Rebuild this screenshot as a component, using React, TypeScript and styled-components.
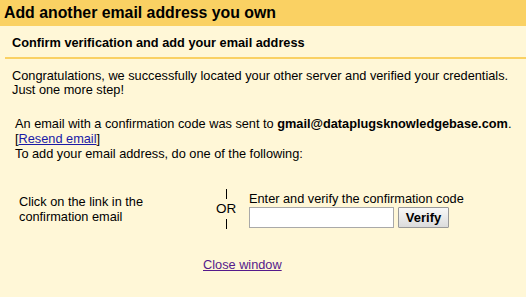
import React from "react";
import styled, { createGlobalStyle } from "styled-components";

const Global = createGlobalStyle`
  html, body { margin: 0; padding: 0; background: #fff7d7; }
  body { font-family: "Liberation Sans", Arial, sans-serif; font-size: 12.75px; color: #000; }
`;

const Page = styled.div`
  width: 526px;
  height: 297px;
  background: #fff7d7;
  overflow: hidden;
`;

const TitleBar = styled.div`
  height: 26px;
  background: #fad163;
  padding-left: 4px;
  font-size: 15.85px;
  font-weight: bold;
  line-height: 26px;
`;

const Panel = styled.div`
  margin-left: 5px;
`;

const SubHeader = styled.div`
  height: 31px;
  padding-left: 7px;
  border-bottom: 2px solid #fad163;
  font-weight: bold;
  line-height: 33px;
`;

const Body = styled.div`
  padding: 10px 0 0 7px;
`;

const Para = styled.div<{ $indent?: number; $gap?: number }>`
  padding-left: ${(p) => p.$indent ?? 0}px;
  margin-top: ${(p) => p.$gap ?? 0}px;
`;

const Line = styled.div<{ $h?: number }>`
  line-height: ${(p) => p.$h ?? 15}px;
`;

const Link = styled.a<{ $visited?: boolean }>`
  color: ${(p) => (p.$visited ? "#551a8b" : "#1a1aa6")};
  text-decoration: underline;
  cursor: pointer;
`;

const Choices = styled.div`
  display: grid;
  grid-template-columns: 199px 30px auto;
  align-items: center;
  margin-top: 25px;
`;

const LeftCell = styled.div`
  padding-left: 7px;
  line-height: 15px;
`;

const OrCell = styled.div`
  display: flex;
  flex-direction: column;
  align-items: center;
  line-height: 14px;
  font-size: 13.5px;
`;

const Bar = styled.span`
  width: 1px;
  height: 10px;
  background: #000;
  margin: 3px 0;
`;

const OrText = styled.span``;

const RightCell = styled.div`
  padding-left: 8px;
`;

const Label = styled.div`
  line-height: 15px;
  margin-bottom: 1px;
`;

const InputRow = styled.div`
  display: flex;
  align-items: center;
  gap: 4px;
`;

const CodeInput = styled.input`
  box-sizing: border-box;
  width: 145px;
  height: 21px;
  border: 1px solid #a9a9a9;
  background: #fff;
  padding: 0 2px;
  font: 13px "Liberation Sans", Arial, sans-serif;
  outline: none;
`;

const VerifyButton = styled.button`
  box-sizing: border-box;
  width: 51px;
  height: 21px;
  border: 1px solid #999;
  border-radius: 1px;
  background: linear-gradient(#f8f8f8, #dcdcdc);
  font: bold 13px "Liberation Sans", Arial, sans-serif;
  color: #000;
  padding: 0;
`;

const Footer = styled.div`
  margin-top: 25px;
  padding-left: 191px;
  line-height: 15px;
`;

export default function App() {
  return (
    <Page>
      <Global />
      <TitleBar>Add another email address you own</TitleBar>
      <Panel>
        <SubHeader>Confirm verification and add your email address</SubHeader>
        <Body>
          <Para>
            <Line $h={14}>
              Congratulations, we successfully located your other server and verified your credentials.
            </Line>
            <Line $h={14}>Just one more step!</Line>
          </Para>
          <Para $indent={3} $gap={19}>
            <Line>
              An email with a confirmation code was sent to <b>gmail@dataplugsknowledgebase.com</b>.
            </Line>
            <Line>
              [<Link>Resend email</Link>]
            </Line>
            <Line>To add your email address, do one of the following:</Line>
          </Para>
          <Choices>
            <LeftCell>
              Click on the link in the
              <br />
              confirmation email
            </LeftCell>
            <OrCell>
              <Bar />
              <OrText>OR</OrText>
              <Bar />
            </OrCell>
            <RightCell>
              <Label>Enter and verify the confirmation code</Label>
              <InputRow>
                <CodeInput type="text" />
                <VerifyButton>Verify</VerifyButton>
              </InputRow>
            </RightCell>
          </Choices>
          <Footer>
            <Link $visited>Close window</Link>
          </Footer>
        </Body>
      </Panel>
    </Page>
  );
}
